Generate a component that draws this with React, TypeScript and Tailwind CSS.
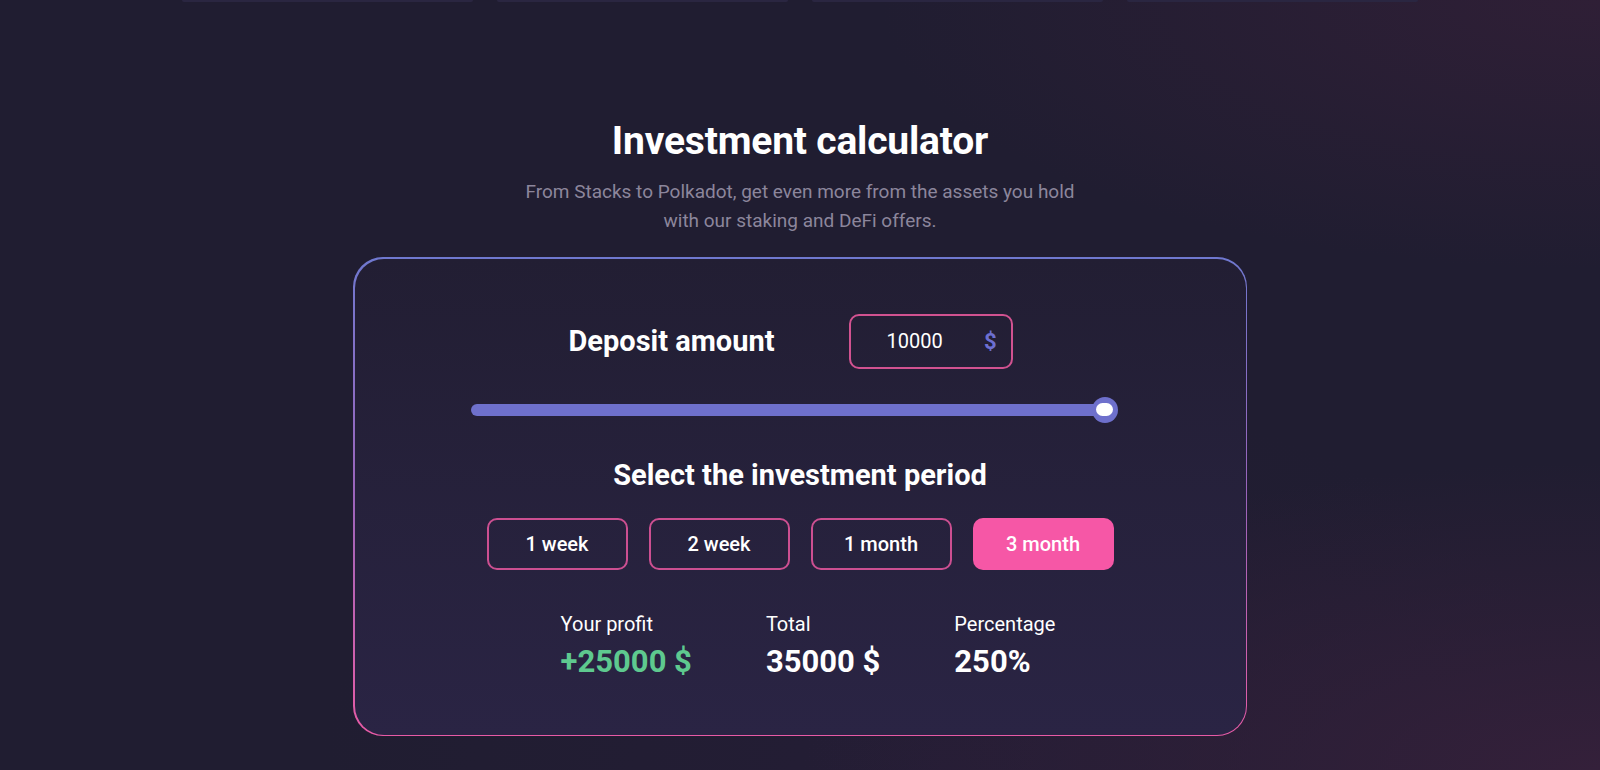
import { useState } from "react";

const periods = ["1 week", "2 week", "1 month", "3 month"];

export default function App() {
  const [period, setPeriod] = useState("3 month");
  const [amount] = useState(10000);

  return (
    <div className="relative min-h-screen w-full overflow-hidden bg-[#201d31] font-['Roboto',sans-serif] text-white bg-[radial-gradient(ellipse_45%_35%_at_100%_0%,#2f1f36_0%,transparent_100%),radial-gradient(ellipse_50%_40%_at_100%_100%,#34203a_0%,transparent_100%),radial-gradient(ellipse_40%_50%_at_60%_100%,#241d35_0%,transparent_100%)]">
      {/* faint bottoms of the previous section */}
      <div className="flex justify-center gap-[24px]">
        {[0, 1, 2, 3].map((i) => (
          <div key={i} className="h-[2px] w-[291px] rounded-b bg-[#2a2641]" />
        ))}
      </div>

      <div className="flex flex-col items-center pt-[116px]">
        <h1 className="text-[39px] leading-[46px] font-bold tracking-[-0.2px]">
          Investment calculator
        </h1>
        <p className="mt-[13px] text-center text-[19px] leading-[29px] text-[#8c869c]">
          From Stacks to Polkadot, get even more from the assets you hold
          <br />
          with our staking and DeFi offers.
        </p>

        {/* Card with gradient border */}
        <div className="mt-[22px] w-[894px] rounded-[30px] bg-gradient-to-b from-[#6f78cf] via-[#9b64bb] to-[#e85aa6] p-[1.5px]">
          <div className="flex h-[476px] flex-col rounded-[29px] bg-gradient-to-b from-[#221e33] to-[#2a2444]">
            {/* Deposit row */}
            <div className="mt-[55px] flex items-center justify-center gap-[74px] pr-[19px]">
              <span className="text-[29px] leading-[34px] font-bold">Deposit amount</span>
              <div className="flex h-[55px] w-[164px] items-center justify-between rounded-[10px] border-2 border-[#d15290] pl-[36px] pr-[14px]">
                <span className="text-[20px]">{amount}</span>
                <span className="text-[22px] font-bold text-[#6d6fd1]">$</span>
              </div>
            </div>

            {/* Slider */}
            <div className="ml-[116px] mt-[28px] flex h-[26px] w-[647px] items-center">
              <div className="h-[12px] flex-1 rounded-l-full bg-[#6e70cc]" />
              <div className="-ml-[2px] flex h-[26px] w-[26px] items-center justify-center rounded-full bg-[#6e70cc]">
                <div className="h-[13px] w-[17px] rounded-full bg-white" />
              </div>
            </div>

            <h2 className="mt-[35px] text-center text-[29px] leading-[34px] font-bold">
              Select the investment period
            </h2>

            <div className="mt-[26px] flex justify-center gap-[21px]">
              {periods.map((p) => (
                <button
                  key={p}
                  onClick={() => setPeriod(p)}
                  className={
                    p === period
                      ? "h-[52px] w-[141px] rounded-[10px] bg-[#f657a6] text-[20px] font-medium text-white"
                      : "h-[52px] w-[141px] rounded-[10px] border-2 border-[#cc4f91] text-[20px] font-medium text-white"
                  }
                >
                  {p}
                </button>
              ))}
            </div>

            {/* Results */}
            <div className="mt-[42px] flex justify-center gap-[74px] pl-[16px]">
              <div className="flex flex-col gap-[8px]">
                <span className="text-[20px] leading-[24px]">Your profit</span>
                <span className="text-[31px] leading-[36px] font-bold text-[#5ec98f]">+25000 $</span>
              </div>
              <div className="flex flex-col gap-[8px]">
                <span className="text-[20px] leading-[24px]">Total</span>
                <span className="text-[31px] leading-[36px] font-bold">35000 $</span>
              </div>
              <div className="flex flex-col gap-[8px]">
                <span className="text-[20px] leading-[24px]">Percentage</span>
                <span className="text-[31px] leading-[36px] font-bold">250%</span>
              </div>
            </div>
          </div>
        </div>
      </div>
    </div>
  );
}
